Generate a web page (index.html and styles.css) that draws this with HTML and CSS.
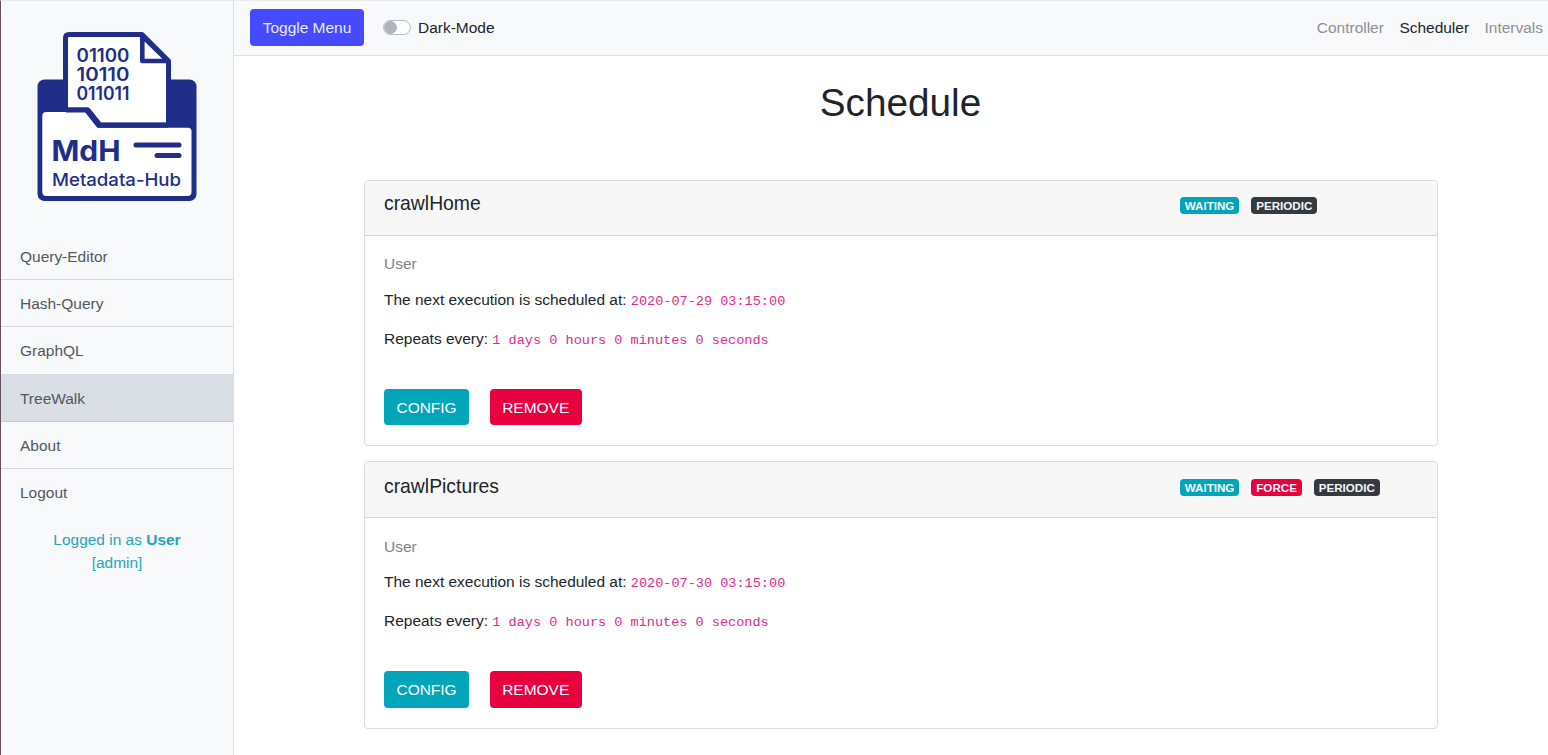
FILE: index.html
```html
<!DOCTYPE html>
<html lang="en">
<head>
<meta charset="utf-8">
<title>Metadata-Hub</title>
<link rel="stylesheet" href="styles.css">
</head>
<body>
<div class="wrapper">
  <aside class="sidebar">
    <svg class="logo" width="162" height="172" viewBox="36 31 162 172">
      <rect x="37.500" y="79.500" width="159" height="121.500" rx="7" fill="#202e8a"/>
      <path d="M65.500 110V38q0-3.500 3.500-3.500H142L168.500 61V125H100L88 110Z" fill="#fff" stroke="#202e8a" stroke-width="5" stroke-linejoin="round"/>
      <path d="M142.300 36V61H168Z" fill="#fff" stroke="#202e8a" stroke-width="4.600" stroke-linejoin="round"/>
      <path d="M42.300 116q0-4 4-4H86L97 126.500q1 1.300 2.500 1.300H188q3.500 0 3.500 3.500V192q0 4-4 4H46.300q-4 0-4-4Z" fill="#fff"/>
      <path d="M66 110H86.500L98.500 125.300H168" fill="none" stroke="#202e8a" stroke-width="5"/>
      <g class="logo-text">
        <text x="76.500" y="61.800" font-size="18.300" font-weight="600" textLength="53" lengthAdjust="spacingAndGlyphs">01100</text>
        <text x="76.500" y="80.800" font-size="18.300" font-weight="600" textLength="53" lengthAdjust="spacingAndGlyphs">10110</text>
        <text x="76.500" y="99.800" font-size="18.300" font-weight="600" textLength="53" lengthAdjust="spacingAndGlyphs">011011</text>
        <text x="51.500" y="160.500" font-size="28" font-weight="700" textLength="69" lengthAdjust="spacingAndGlyphs">MdH</text>
        <text x="52" y="186.200" font-size="17.500" font-weight="500" textLength="129" lengthAdjust="spacingAndGlyphs">Metadata-Hub</text>
      </g>
      <path d="M136 145H179M157 155.500H179" stroke="#202e8a" stroke-width="5" stroke-linecap="round"/>
    </svg>
    <nav class="menu">
      <a class="menu-item">Query-Editor</a>
      <a class="menu-item">Hash-Query</a>
      <a class="menu-item">GraphQL</a>
      <a class="menu-item active">TreeWalk</a>
      <a class="menu-item">About</a>
      <a class="menu-item last">Logout</a>
    </nav>
    <p class="login">Logged in as <b>User</b><br>[admin]</p>
  </aside>
  <div class="page">
    <header class="topbar">
      <button class="btn primary">Toggle Menu</button>
      <label class="switch"><span class="track"><span class="knob"></span></span>Dark-Mode</label>
      <nav class="links"><a>Controller</a><a class="current">Scheduler</a><a>Intervals</a></nav>
    </header>
    <main class="content">
      <h1 class="title">Schedule</h1>
      <section class="card">
        <div class="card-header">
          <h5 class="name">crawlHome</h5>
          <div class="badges"><span class="badge info">WAITING</span><span class="badge dark">PERIODIC</span></div>
        </div>
        <div class="card-body">
          <h6 class="owner">User</h6>
          <p class="line">The next execution is scheduled at: <code>2020-07-29 03:15:00</code></p>
          <p class="line">Repeats every: <code>1 days 0 hours 0 minutes 0 seconds</code></p>
          <div class="actions"><button class="btn info">CONFIG</button><button class="btn danger">REMOVE</button></div>
        </div>
      </section>
      <section class="card second">
        <div class="card-header">
          <h5 class="name">crawlPictures</h5>
          <div class="badges"><span class="badge info">WAITING</span><span class="badge danger">FORCE</span><span class="badge dark">PERIODIC</span></div>
        </div>
        <div class="card-body">
          <h6 class="owner">User</h6>
          <p class="line">The next execution is scheduled at: <code>2020-07-30 03:15:00</code></p>
          <p class="line">Repeats every: <code>1 days 0 hours 0 minutes 0 seconds</code></p>
          <div class="actions"><button class="btn info">CONFIG</button><button class="btn danger">REMOVE</button></div>
        </div>
      </section>
    </main>
  </div>
</div>
</body>
</html>
```
FILE: styles.css
```css
* { box-sizing: border-box; }
html { font-size: 15.484px; }
body { margin: 0; font-family: "Liberation Sans", Arial, sans-serif; font-size: 1rem; line-height: 1.5; color: #212529; background: #fff; overflow: hidden; }
.wrapper { display: flex; height: 755px; }
.sidebar { width: 234px; flex: none; background: #f8f9fb; border-left: 1px solid #66505f; border-right: 1px solid #dee0e3; border-top: 1px solid #e9eaec; }
.logo { display: block; margin: 30px 0 0 35px; }
.logo-text { font-family: Inter, sans-serif; fill: #202e8a; }
.menu { display: flex; flex-direction: column; margin-top: 29.5px; }
.menu-item { height: 47.4px; padding: 0 19px; line-height: 47px; color: #53585d; border-bottom: 1px solid #d7d9dc; }
.menu-item.active { background: #dadfe6; border-bottom-color: #c6cacf; }
.menu-item.last { border-bottom: 0; }
.login { margin: 11px 0 0; text-align: center; line-height: 23px; color: #22a7b5; }
.page { flex: 1; display: flex; flex-direction: column; }
.topbar { height: 56px; display: flex; align-items: center; padding: 0 5px 0 16px; background: #f8f9fb; border-top: 1px solid #e9eaec; border-bottom: 1px solid #dee0e3; }
.btn { height: 37px; border: 0; border-radius: 4px; padding: 0 12.5px; font-family: inherit; font-size: 1rem; color: #fff; white-space: nowrap; }
.btn.primary { width: 114px; height: 37px; margin-top: -1px; background: #454bfc; color: #e9eaff; }
.info { background: #00a5ba; }
.danger { background: #e8003e; }
.dark { background: #343a40; }
.switch { display: flex; align-items: center; margin-left: 19px; gap: 7px; }
.track { width: 28px; height: 15px; margin-top: -1px; border: 1px solid #b4bac1; border-radius: 8px; background: #fff; }
.knob { display: block; width: 13px; height: 13px; border-radius: 50%; background: #adb5bd; }
.links { display: flex; gap: 15.5px; margin-left: auto; color: #8d8f91; }
.current { color: #212529; }
.content { display: flex; flex-direction: column; padding: 23px 110px 0 130px; }
.title { margin: 0 0 54px -1px; font-size: 2.5rem; font-weight: 400; line-height: 47px; text-align: center; }
.card { height: 265.5px; border: 1px solid #dcdcdd; border-radius: 4px; overflow: hidden; }
.card.second { height: 268px; margin-top: 15.5px; }
.card-header { height: 54.5px; display: flex; justify-content: space-between; padding: 11px 0 0 19px; background: #f7f7f7; border-bottom: 1px solid #d6d6d6; }
.second .card-header { height: 56px; padding-top: 12.5px; }
.name { margin: 0; font-size: 1.25rem; font-weight: 400; line-height: 23px; }
.badges { width: 257px; display: flex; align-items: flex-start; gap: 12.3px; padding-top: 4.5px; }
.second .badges { padding-top: 4px; }
.badge { height: 17px; padding: 0 4.8px; border-radius: 4px; font-size: 11.6px; font-weight: 700; line-height: 17px; color: #f5f7f8; }
.card-body { padding: 19px; }
.second .card-body { padding-top: 20px; }
.owner { margin: 0 0 15px; font-size: 1rem; font-weight: 400; line-height: 18.5px; color: #7d848a; }
.line { height: 23px; margin: 0 0 16px; line-height: 23px; }
.second .owner { margin-bottom: 13px; }
.line code { font-family: "Liberation Mono", monospace; font-size: 13.55px; line-height: 1; color: #dc2c93; }
.actions { display: flex; gap: 20.5px; margin-top: 39px; }
.second .actions { margin-top: 39.5px; }
.actions .btn { height: 36px; padding-top: 1px; }
.second .actions .btn { height: 37px; }
```
